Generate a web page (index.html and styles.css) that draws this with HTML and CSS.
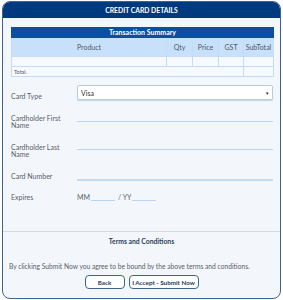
FILE: index.html
```html
<!DOCTYPE html>
<html>
<head>
<meta charset="utf-8">
<link rel="stylesheet" href="styles.css">
</head>
<body>
<div class="card">
  <div class="card-head">CREDIT CARD DETAILS</div>
  <div class="card-body">
    <table class="summary">
      <colgroup>
        <col class="c-prod"><col class="c-qty"><col class="c-price"><col class="c-gst"><col class="c-sub">
      </colgroup>
      <tr><th class="title" colspan="5">Transaction Summary</th></tr>
      <tr class="cols">
        <th>Product</th>
        <th>Qty</th>
        <th>Price</th>
        <th>GST</th>
        <th>SubTotal</th>
      </tr>
      <tr class="row"><td></td><td></td><td></td><td></td><td></td></tr>
      <tr class="row"><td class="total" colspan="4">Total.</td><td></td></tr>
    </table>

    <div class="form">
      <div class="frow r1">
        <div class="label l1">Card Type</div>
        <div class="select"><span>Visa</span><span class="arrow">▾</span></div>
      </div>
      <div class="frow r2">
        <div class="label">Cardholder First<br>Name</div>
        <div class="line h7"></div>
      </div>
      <div class="frow r3">
        <div class="label">Cardholder Last<br>Name</div>
        <div class="line h6"></div>
      </div>
      <div class="frow r4">
        <div class="label">Card Number</div>
        <div class="line h7 thick"></div>
      </div>
      <div class="frow r5">
        <div class="label">Expires</div>
        <div class="expiry">
          <span class="txt">MM</span><span class="short"></span>
          <span class="txt slash">/ YY</span><span class="short"></span>
        </div>
      </div>
    </div>
  </div>
  <div class="terms">
    <div class="terms-title">Terms and Conditions</div>
    <p class="terms-text">By clicking Submit Now you agree to be bound by the above terms and conditions.</p>
    <div class="buttons">
      <button class="btn back">Back</button>
      <button class="btn accept">I Accept - Submit Now</button>
    </div>
  </div>
</div>
</body>
</html>
```

FILE: styles.css
```css
html, body {
  margin: 0;
  padding: 0;
  background: #ffffff;
}
body {
  font-family: Lato, "Liberation Sans", sans-serif;
  color: #555b63;
}
.card {
  margin: 1px 2px 0 2px;
  width: 277px;
  height: 296px;
  border: 1px solid #3d6594;
  border-radius: 8px;
  background: #f3f7fc;
  overflow: hidden;
  display: flex;
  flex-direction: column;
}
.card-head {
  background: #003a7e;
  color: #ffffff;
  height: 16px;
  line-height: 16px;
  font-size: 6.8px;
  font-weight: bold;
  text-align: center;
}
.card-body {
  padding: 9px 7px 0 8px;
  flex: 1;
}
.summary {
  width: 262px;
  border-collapse: collapse;
  font-size: 7px;
  table-layout: fixed;
}
.summary th, .summary td {
  border: 1px solid #c4dcf5;
  padding: 0;
  font-weight: normal;
}
.summary .title {
  background: #0b4f9f;
  color: #ffffff;
  font-weight: bold;
  font-size: 7px;
  height: 9px;
  line-height: 9px;
  border-color: #0b4f9f;
}
.summary .cols th {
  background: #c8e0fa;
  height: 18px;
  color: #4e5a68;
  font-size: 7px;
}
.c-prod { width: 155px; }
.c-qty { width: 26px; }
.c-price { width: 26px; }
.c-gst { width: 25px; }
.c-sub { width: 30px; }
.summary .row td {
  background: #f6faff;
  height: 9px;
}
.summary .total {
  font-size: 5.5px;
  text-align: left;
  padding-left: 2px;
  color: #555;
}
.form {
  margin-top: 8px;
  display: flex;
  flex-direction: column;
}
.frow {
  display: flex;
  align-items: flex-start;
}
.label {
  width: 66px;
  flex: none;
  font-size: 7px;
  line-height: 7.5px;
  color: #5a6068;
}
.l1 { padding-top: 8px; }
.select {
  flex: 1;
  height: 13px;
  border: 1px solid #b9cde4;
  border-radius: 2px;
  background: #ffffff;
  box-shadow: 0 1px 1px rgba(150, 175, 205, 0.5);
  display: flex;
  align-items: center;
  justify-content: space-between;
  padding: 0 3px 0 3px;
  font-size: 7px;
  color: #333;
}
.arrow {
  font-size: 5px;
  color: #222;
}
.r2 { margin-top: 14px; }
.r3 { margin-top: 14px; }
.r4 { margin-top: 14px; }
.r5 { margin-top: 13px; }
.line {
  flex: 1;
  border-bottom: 1px solid #b8d6f4;
}
.h7 { height: 6px; }
.h6 { height: 5px; }
.thick { border-bottom: 2px solid #c2dcf6; }
.expiry {
  display: flex;
  align-items: flex-start;
  font-size: 7px;
  line-height: 7.5px;
  color: #5a6068;
}
.short {
  width: 24px;
  height: 6px;
  border-bottom: 1px solid #b8d6f4;
  margin: 0 3px 0 1px;
}
.terms {
  border-top: 1px solid #d6d9dd;
  height: 66px;
  text-align: center;
}
.terms-title {
  margin-top: 5px;
  font-size: 6.8px;
  font-weight: bold;
  color: #2d3e5a;
  line-height: 8px;
}
.terms-text {
  margin: 17px 0 0 6px;
  text-align: left;
  font-size: 6.7px;
  line-height: 8px;
  color: #5a6068;
  white-space: nowrap;
}
.buttons {
  margin-top: 5px;
  display: flex;
  justify-content: center;
  gap: 4px;
}
.btn {
  height: 14px;
  border: 1px solid #3d6594;
  border-radius: 4px;
  background: #ffffff;
  color: #243a5e;
  font-family: Lato, "Liberation Sans", sans-serif;
  font-size: 6.3px;
  font-weight: bold;
  padding: 0;
}
.back { width: 40px; }
.accept { width: 70px; }
```
